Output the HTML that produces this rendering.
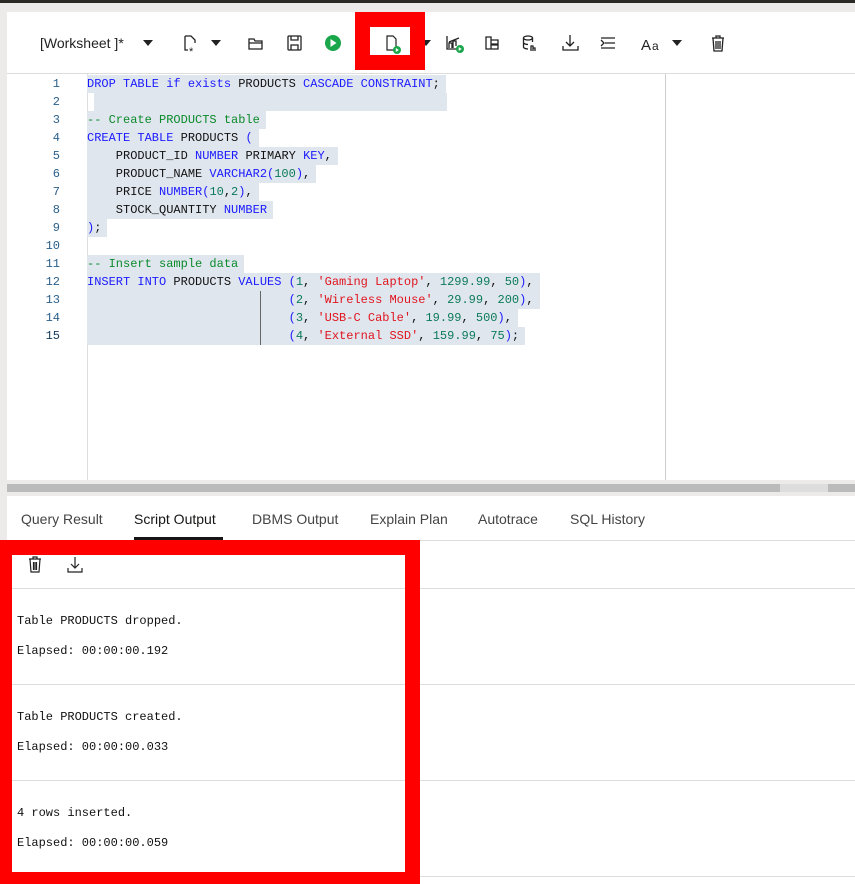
<!DOCTYPE html>
<html><head><meta charset="utf-8"><style>
*{margin:0;padding:0;box-sizing:border-box}
body{width:855px;height:884px;position:relative;overflow:hidden;background:#ecebea;font-family:"Liberation Sans",sans-serif}
.abs{position:absolute}
.ln{position:absolute;left:30px;width:30px;text-align:right;color:#2a5f8a;font-family:"Liberation Mono",monospace;font-size:12px}
.cl{position:absolute;left:87px;height:18px;line-height:18px;background:#e0e6ee;padding-right:6px;white-space:pre;font-family:"Liberation Mono",monospace;font-size:12px;color:#111}
.k{color:#1a1aff}.c{color:#0a8a2a}.s{color:#e0141e}.n{color:#0a7a5a}
.tab{position:absolute;top:511px;font-size:14px;color:#444}
.out{position:absolute;left:17px;font-family:"Liberation Mono",monospace;font-size:12px;color:#111}
.sep{position:absolute;left:7px;width:848px;height:1px;background:#ddd}
</style></head><body>
<div class="abs" style="left:0;top:0;width:855px;height:3px;background:#2b2926"></div>
<div class="abs" style="left:7px;top:12px;width:848px;height:872px;background:#fff"></div>
<div class="abs" style="left:7px;top:73px;width:848px;height:1px;background:#ddd"></div>
<div class="abs" style="left:40px;top:35px;font-size:14px;color:#222">[Worksheet ]*</div>
<svg class="abs" style="left:0;top:0" width="855" height="74">
<g fill="#222"><path d="M143 40h10l-5 6z"/><path d="M211 40h10l-5 6z"/><path d="M421 40h10l-5 6z"/><path d="M672 40h10l-5 6z"/></g>
<g fill="none" stroke="#222" stroke-width="1.3">
<path d="M185 36h6l4 4v3M185 36v14h3"/><text x="189" y="55" font-size="11" fill="#222" stroke="none">*</text>
<path d="M249 39h5l1 2h7v8h-13z M249 43h13"/>
<rect x="288" y="36" width="13" height="14" rx="1"/><path d="M291 36v4h7v-4M291 50v-5h7v5"/>
<path d="M447 36v13h13M449 48v-5h3v5M453 48v-7h3v5M449 42l10-4"/>
<path d="M486 37h5v12h-5zM491 40h7v4h-7zM491 45h7v4h-7z"/>
<ellipse cx="528" cy="38" rx="4.5" ry="2"/><path d="M523.5 38v9c0 1 2 2 4.5 2M523.5 42.5c0 1 2 2 4.5 2M532.5 38v4M531 51v-5h2v5M533 51v-3h2v3"/>
<path d="M570 35v11M566 42l4 4 4-4M563 46v4h15v-4"/>
<path d="M601 38h14M605 43h10M601 48h14M601 40l3 3-3 3"/>
<path d="M712 38h12M716 38v-2h4v2M713 38l1 13h8l1-13M716 41v8M718 41v8M720 41v8"/>
</g>
<text x="641" y="50" font-size="15" fill="#222" font-family="Liberation Sans">A</text><text x="652" y="50" font-size="12" fill="#222" font-family="Liberation Sans">a</text>
<circle cx="333" cy="43" r="8" fill="#1aa64a"/><path d="M330.5 39v8l6-4z" fill="#fff"/>
<circle cx="460" cy="49" r="4" fill="#1aa64a"/><path d="M458.7 47v4l3-2z" fill="#fff"/>
</svg>
<div class="abs" style="left:355px;top:12px;width:70px;height:58px;background:#f00"></div>
<div class="abs" style="left:370px;top:27px;width:40px;height:28px;background:#fff"></div>
<svg class="abs" style="left:370px;top:27px" width="40" height="28"><path d="M17 9h6l3 3v11h-9z" fill="none" stroke="#222" stroke-width="1.2"/><circle cx="27" cy="23" r="4" fill="#1aa64a"/><path d="M25.8 21v4l3-2z" fill="#fff"/></svg>
<div class="abs" style="left:87px;top:74px;width:1px;height:406px;background:#ddd"></div>
<div class="abs" style="left:665px;top:74px;width:1px;height:406px;background:#ccc"></div>
<div class="ln" style="top:77px">1</div><div class="ln" style="top:95px">2</div><div class="ln" style="top:113px">3</div><div class="ln" style="top:131px">4</div><div class="ln" style="top:149px">5</div><div class="ln" style="top:167px">6</div><div class="ln" style="top:185px">7</div><div class="ln" style="top:203px">8</div><div class="ln" style="top:221px">9</div><div class="ln" style="top:239px">10</div><div class="ln" style="top:257px">11</div><div class="ln" style="top:275px">12</div><div class="ln" style="top:293px">13</div><div class="ln" style="top:311px">14</div><div class="ln" style="top:329px;color:#12385a">15</div>
<div class="cl" style="top:75px"><span class="k">DROP TABLE if exists</span> PRODUCTS <span class="k">CASCADE CONSTRAINT</span>;</div>
<div class="cl" style="top:93px;left:94px;width:353px;padding-right:0"> </div>
<div class="cl" style="top:111px"><span class="c">-- Create PRODUCTS table</span></div>
<div class="cl" style="top:129px"><span class="k">CREATE TABLE</span> PRODUCTS <span class="k">(</span></div>
<div class="cl" style="top:147px">    PRODUCT_ID <span class="k">NUMBER</span> PRIMARY <span class="k">KEY</span>,</div>
<div class="cl" style="top:165px">    PRODUCT_NAME <span class="k">VARCHAR2(</span><span class="n">100</span><span class="k">)</span>,</div>
<div class="cl" style="top:183px">    PRICE <span class="k">NUMBER(</span><span class="n">10</span>,<span class="n">2</span><span class="k">)</span>,</div>
<div class="cl" style="top:201px">    STOCK_QUANTITY <span class="k">NUMBER</span></div>
<div class="cl" style="top:219px"><span class="k">)</span>;</div>
<div class="cl" style="top:237px;left:94px;width:0;padding-right:0"></div>
<div class="cl" style="top:255px"><span class="c">-- Insert sample data</span></div>
<div class="cl" style="top:273px"><span class="k">INSERT INTO</span> PRODUCTS <span class="k">VALUES (</span><span class="n">1</span>, <span class="s">'Gaming Laptop'</span>, <span class="n">1299.99</span>, <span class="n">50</span><span class="k">)</span>,</div>
<div class="cl" style="top:291px">                            <span class="k">(</span><span class="n">2</span>, <span class="s">'Wireless Mouse'</span>, <span class="n">29.99</span>, <span class="n">200</span><span class="k">)</span>,</div>
<div class="cl" style="top:309px">                            <span class="k">(</span><span class="n">3</span>, <span class="s">'USB-C Cable'</span>, <span class="n">19.99</span>, <span class="n">500</span><span class="k">)</span>,</div>
<div class="cl" style="top:327px">                            <span class="k">(</span><span class="n">4</span>, <span class="s">'External SSD'</span>, <span class="n">159.99</span>, <span class="n">75</span><span class="k">)</span>;</div>
<div class="abs" style="left:260px;top:291px;width:1px;height:54px;background:#666"></div>
<div class="abs" style="left:7px;top:480px;width:848px;height:16px;background:#ecebea"></div>
<div class="abs" style="left:7px;top:484px;width:773px;height:8px;background:#bbb"></div>
<div class="abs" style="left:780px;top:484px;width:48px;height:8px;background:#ddd"></div>
<div class="abs" style="left:828px;top:484px;width:27px;height:8px;background:#bbb"></div>
<div class="tab" style="left:21px">Query Result</div>
<div class="tab" style="left:134px;color:#161513">Script Output</div>
<div class="abs" style="left:134px;top:537px;width:89px;height:3px;background:#161513"></div>
<div class="tab" style="left:252px">DBMS Output</div>
<div class="tab" style="left:370px">Explain Plan</div>
<div class="tab" style="left:478px">Autotrace</div>
<div class="tab" style="left:570px">SQL History</div>
<div class="sep" style="top:540px"></div>
<div class="sep" style="top:588px"></div><div class="sep" style="top:684px"></div><div class="sep" style="top:780px"></div><div class="sep" style="top:876px"></div>
<div class="abs" style="left:0;top:540px;width:420px;height:344px;border:12px solid #f00;border-top-width:15px;border-right-width:15px;border-bottom-width:12px"></div>
<svg class="abs" style="left:20px;top:554px" width="80" height="24"><g fill="none" stroke="#222" stroke-width="1.2"><path d="M9 5h12M13 5V3h4v2M10 5l1 13h8l1-13M13.5 8v8M15 8v8M16.5 8v8"/><path d="M55 3v11M51 10l4 4 4-4M48 14v4h14v-4"/></g></svg>
<div class="out" style="top:614px">Table PRODUCTS dropped.</div>
<div class="out" style="top:644px">Elapsed: 00:00:00.192</div>
<div class="out" style="top:710px">Table PRODUCTS created.</div>
<div class="out" style="top:740px">Elapsed: 00:00:00.033</div>
<div class="out" style="top:806px">4 rows inserted.</div>
<div class="out" style="top:836px">Elapsed: 00:00:00.059</div>
</body></html>
